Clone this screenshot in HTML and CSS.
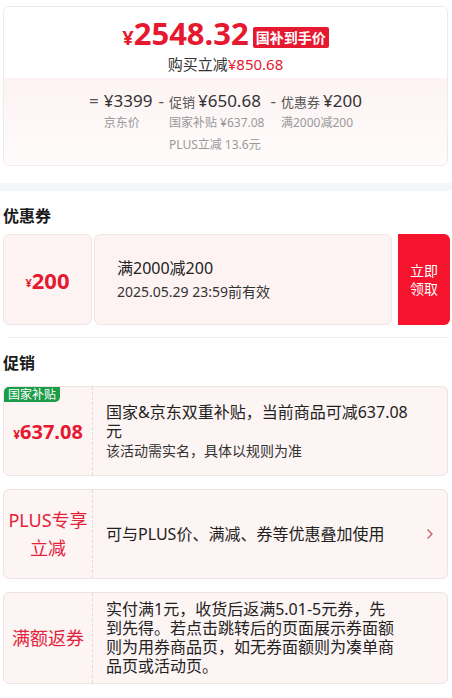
FILE: index.html
```html
<!DOCTYPE html>
<html>
<head>
	<meta charset="utf-8">
	<title>优惠详情</title>
	<link rel="stylesheet" href="styles.css">
</head>
<body>
	<section class="block">
		<div class="price-card">
			<div class="price-top">
				<div class="price-main"><span class="yen">¥</span><span class="num">2548.32</span><span class="tag">国补到手价</span></div>
				<div class="price-save">购买立减<em>¥850.68</em></div>
			</div>
			<div class="price-detail">
				<div class="calc">
					<span class="op">=</span>
					<div class="calc-col">
						<div class="calc-val">¥3399</div>
						<div class="calc-sub">京东价</div>
					</div>
				</div>
				<div class="calc">
					<span class="op">-</span>
					<div class="calc-col">
						<div class="calc-val"><small>促销</small>¥650.68</div>
						<div class="calc-sub">国家补贴 ¥637.08</div>
						<div class="calc-sub">PLUS立减 13.6元</div>
					</div>
				</div>
				<div class="calc">
					<span class="op">-</span>
					<div class="calc-col">
						<div class="calc-val"><small>优惠券</small>¥200</div>
						<div class="calc-sub">满2000减200</div>
					</div>
				</div>
			</div>
		</div>
	</section>

	<div class="band"></div>

	<section class="block">
		<h3 class="sec-title">优惠券</h3>
		<div class="coupon">
			<div class="coupon-amt"><small>¥</small>200</div>
			<div class="coupon-info">
				<div class="coupon-name">满2000减200</div>
				<div class="coupon-date">2025.05.29 23:59前有效</div>
			</div>
			<div class="coupon-btn">立即<br>领取</div>
		</div>
		<div class="line"></div>
	</section>

	<section class="block">
		<h3 class="sec-title promo-title">促销</h3>

		<div class="promo">
			<span class="green-tag">国家补贴</span>
			<div class="promo-left"><span class="amt"><small>¥</small>637.08</span></div>
			<div class="promo-text">
				<p>国家&amp;京东双重补贴，当前商品可减637.08元</p>
				<p class="note">该活动需实名，具体以规则为准</p>
			</div>
		</div>

		<div class="promo">
			<div class="promo-left red-name">PLUS专享<br>立减</div>
			<div class="promo-text">
				<p>可与PLUS价、满减、券等优惠叠加使用</p>
			</div>
			<svg class="arrow" width="8" height="12" viewBox="0 0 8 12"><path d="M1.5 1.5 L6 6 L1.5 10.5" fill="none" stroke="#c95a66" stroke-width="1.3"/></svg>
		</div>

		<div class="promo">
			<div class="promo-left red-name">满额返券</div>
			<div class="promo-text narrow">
				<p>实付满1元，收货后返满5.01-5元券，先到先得。若点击跳转后的页面展示券面额则为用券商品页，如无券面额则为凑单商品页或活动页。</p>
			</div>
		</div>
	</section>
</body>
</html>
```

FILE: styles.css
```css
body{margin: 0;
	background: #fff;
	color: #222;
	font-family: "Noto Sans", "Noto Sans CJK SC", sans-serif;}
p, h3{margin: 0;}
.block{padding: 0 4px 0 3px;}
.block:first-child{padding-top: 6px;}

/* price card */
.price-card{border: 1px solid #ebebeb;
	border-radius: 6px;
	overflow: hidden;}
.price-top{padding: 9px 0 4px;
	text-align: center;
	background: #fff;}
.price-main{font-size: 31px;
	line-height: 34px;
	color: #e5192f;
	font-weight: 700;}
.yen{font-size: 20px; line-height: 1;}
.tag{display: inline-block;
	margin-left: 4px;
	padding: 0 3px;
	background: #e5192f;
	color: #fff;
	font-size: 14px;
	line-height: 21px;
	border-radius: 2px;
	vertical-align: 2px;}
.price-save{margin-top: 4px;
	font-size: 15px;
	line-height: 20px;
	color: #333;}
.price-save em{font-style: normal; color: #e5192f;}

.price-detail{display: flex;
	justify-content: center;
	gap: 6px;
	padding: 12px 0 9px;
	line-height: 22px;
	background: linear-gradient(#fdf3f3, #fffbfb);}
.calc{display: flex;}
.op{margin-right: 5px;
	font-size: 17px;
	color: #555;}
.calc-val{font-size: 17px; color: #333;}
.calc-val small{font-size: 13px; line-height: 1; color: #555; margin-right: 3px;}
.calc-sub{font-size: 12px; color: #999;}

.band{height: 8px;
	margin-top: 17px;
	background: #f5f6fa;}

/* coupon */
.sec-title{padding-top: 14px;
	margin-bottom: 7px;
	font-size: 16px;
	line-height: 22px;
	font-weight: 700;
	color: #1a1a1a;}
.coupon{display: flex;
	height: 91px;
	margin-right: -2px;}
.coupon-amt{width: 87px;
	display: flex;
	align-items: center;
	justify-content: center;
	background: #fdf3f3;
	border: 1px solid #f1e6e7;
	border-radius: 6px;
	color: #e5192f;
	font-size: 22px;
	font-weight: 700;}
.coupon-amt small{font-size: 11px; margin-top: 6px;}
.coupon-info{flex: 1;
	margin: 0 6px 0 2px;
	padding-left: 22px;
	display: flex;
	flex-direction: column;
	justify-content: center;
	background: #fdf3f3;
	border: 1px solid #f1e6e7;
	border-radius: 6px;}
.coupon-name{font-size: 16px; line-height: 23px; color: #222;}
.coupon-date{font-size: 14px; line-height: 23px; color: #333;}
.coupon-btn{width: 52px;
	display: flex;
	align-items: center;
	justify-content: center;
	text-align: center;
	background: #f5132d;
	color: #fff;
	font-size: 14px;
	line-height: 18px;
	border-radius: 0 6px 6px 0;}
.line{height: 1px;
	margin: 12px 0 0 5px;
	background: #eee;}

/* promotions */
.promo-title{padding-top: 14px; margin-bottom: 12px;}
.promo{position: relative;
	display: flex;
	align-items: center;
	min-height: 88px;
	margin-bottom: 13px;
	background: #fdf4f4;
	border: 1px solid #ede2e4;
	border-radius: 6px;}
.promo-left{width: 88px;
	align-self: stretch;
	display: flex;
	align-items: center;
	justify-content: center;
	text-align: center;
	border-right: 1px dashed #e6d9db;}
.amt{color: #e5192f; font-size: 20px; font-weight: 700;}
.amt small{font-size: 12px;}
.red-name{color: #e3223a;
	font-size: 18px;
	line-height: 28px;}
.green-tag{position: absolute;
	top: 0;
	left: 0;
	padding: 0 4px;
	background: #1b9c48;
	color: #fff;
	font-size: 12px;
	line-height: 15px;
	border-radius: 5px 0 5px 0;}
.promo-text{flex: 1;
	padding: 7px 38px 7px 13px;
	font-size: 16px;
	line-height: 19px;
	color: #222;}
.promo-text.narrow{padding-right: 46px;}
.promo-text .note{font-size: 14px; color: #333;}
.arrow{margin-right: 13px; flex: none;}
```
